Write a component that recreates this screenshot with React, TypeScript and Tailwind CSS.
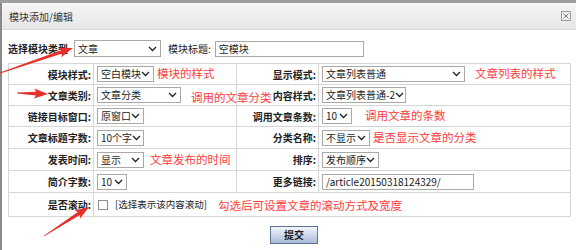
import React from 'react';

const FONT = { fontFamily: '"Noto Sans CJK SC", "Noto Sans", sans-serif' };

interface SelectProps {
  text: string;
  className: string;
}

const Chevron: React.FC = () => (
  <svg width="9" height="6" viewBox="0 0 9 6" className="shrink-0">
    <polyline points="1,1 4.5,4.5 8,1" fill="none" stroke="#222" strokeWidth="1.3" />
  </svg>
);

const Select: React.FC<SelectProps> = ({ text, className }) => (
  <div
    className={`shrink-0 inline-flex items-center justify-between h-[16px] border border-[#a9a9a9] bg-white pl-[3px] pr-[3px] text-[10px] leading-none text-[#222] align-middle ${className}`}
  >
    <span className="whitespace-nowrap">{text}</span>
    <Chevron />
  </div>
);

const Note: React.FC<{ children: React.ReactNode; className?: string }> = ({ children, className = '' }) => (
  <span className={`shrink-0 whitespace-nowrap text-[11.5px] leading-none text-[#ff3b3b] align-middle ${className}`}>{children}</span>
);

type Pt = [number, number];

// tapered red arrow: thin tail, wide notched head
const arrowPoints = (tail: Pt, tip: Pt) => {
  const dx = tip[0] - tail[0];
  const dy = tip[1] - tail[1];
  const len = Math.hypot(dx, dy);
  const d: Pt = [dx / len, dy / len];
  const n: Pt = [-d[1], d[0]];
  const head = 12;
  const base: Pt = [tip[0] - d[0] * head, tip[1] - d[1] * head];
  const at = (p: Pt, k: number): string => `${(p[0] + n[0] * k).toFixed(1)},${(p[1] + n[1] * k).toFixed(1)}`;
  return [
    at(tail, 0.4),
    at(base, 1.8),
    at([base[0] - d[0] * 2, base[1] - d[1] * 2], 5),
    `${tip[0]},${tip[1]}`,
    at([base[0] - d[0] * 2, base[1] - d[1] * 2], -5),
    at(base, -1.8),
    at(tail, -0.4),
  ].join(' ');
};

const ARROWS: [Pt, Pt][] = [
  [[0, 73], [73, 48]],
  [[17, 93], [48, 94]],
  [[44, 236], [89, 207]],
];

const Label: React.FC<{ children: React.ReactNode }> = ({ children }) => (
  <td className="border border-[#d6d6d6] pr-[2px] text-right text-[10px] font-bold text-[#222] whitespace-nowrap">{children}</td>
);

const Value: React.FC<{ children: React.ReactNode; colSpan?: number }> = ({ children, colSpan }) => (
  <td colSpan={colSpan} className="border border-[#d6d6d6] pl-[3px] whitespace-nowrap overflow-visible">
    <div className="flex items-center">{children}</div>
  </td>
);

export default function App() {
  return (
    <div className="relative w-[576px] h-[250px] bg-white overflow-hidden" style={FONT}>
      <div className="h-[3px] bg-[#9e9e9e]" />
      <div className="flex h-[247px] border-l-2 border-[#8a8a8a]">
        <div className="flex-1 flex flex-col">
          <div className="h-[27px] flex items-center justify-between pl-[7px] pr-[5px] bg-gradient-to-b from-[#f6f6f6] to-[#e6e6e6] border-b border-[#d8d8d8]">
            <span className="text-[10px] text-[#333]">模块添加/编辑</span>
            <div className="w-[10px] h-[10px] border border-[#9a9a9a] bg-[#f4f4f4] flex items-center justify-center">
              <svg width="6" height="6" viewBox="0 0 6 6">
                <path d="M0.5 0.5 L5.5 5.5 M5.5 0.5 L0.5 5.5" stroke="#777" strokeWidth="1" />
              </svg>
            </div>
          </div>

          <div className="pl-[6px] pr-[4px] pt-[10px]">
            <div className="flex items-center h-[17px]">
              <span className="text-[10px] font-bold text-[#222] w-[66px]">选择模块类型</span>
              <Select text="文章" className="w-[87px] h-[17px]" />
              <span className="ml-[7px] text-[10px] text-[#222]">模块标题:</span>
              <div className="ml-[4px] w-[149px] h-[16px] border border-[#a9a9a9] flex items-center pl-[3px] text-[10px] leading-none text-[#222]">
                空模块
              </div>
            </div>

            <table className="mt-[6px] w-[562px] table-fixed border-collapse">
              <colgroup>
                <col className="w-[85px]" />
                <col className="w-[143px]" />
                <col className="w-[82px]" />
                <col className="w-[252px]" />
              </colgroup>
              <tbody>
                <tr className="h-[21px]">
                  <Label>模块样式:</Label>
                  <Value>
                    <Select text="空白模块" className="w-[57px]" />
                    <Note className="ml-[3px]">模块的样式</Note>
                  </Value>
                  <Label>显示模式:</Label>
                  <Value>
                    <Select text="文章列表普通" className="w-[143px]" />
                    <Note className="ml-[10px]">文章列表的样式</Note>
                  </Value>
                </tr>
                <tr className="h-[21px]">
                  <Label>文章类别:</Label>
                  <Value>
                    <Select text="文章分类" className="w-[84px]" />
                    <Note className="ml-[10px] relative top-[3px]">调用的文章分类</Note>
                  </Value>
                  <Label>内容样式:</Label>
                  <Value>
                    <Select text="文章列表普通-2" className="w-[84px]" />
                  </Value>
                </tr>
                <tr className="h-[21px]">
                  <Label>链接目标窗口:</Label>
                  <Value>
                    <Select text="原窗口" className="w-[47px]" />
                  </Value>
                  <Label>调用文章条数:</Label>
                  <Value>
                    <Select text="10" className="w-[30px]" />
                    <Note className="ml-[13px]">调用文章的条数</Note>
                  </Value>
                </tr>
                <tr className="h-[22px]">
                  <Label>文章标题字数:</Label>
                  <Value>
                    <Select text="10个字" className="w-[47px]" />
                  </Value>
                  <Label>分类名称:</Label>
                  <Value>
                    <Select text="不显示" className="w-[48px]" />
                    <Note className="ml-[3px]">是否显示文章的分类</Note>
                  </Value>
                </tr>
                <tr className="h-[22px]">
                  <Label>发表时间:</Label>
                  <Value>
                    <Select text="显示" className="w-[47px]" />
                    <Note className="ml-[6px]">文章发布的时间</Note>
                  </Value>
                  <Label>排序:</Label>
                  <Value>
                    <Select text="发布顺序" className="w-[57px]" />
                  </Value>
                </tr>
                <tr className="h-[22px]">
                  <Label>简介字数:</Label>
                  <Value>
                    <Select text="10" className="w-[30px]" />
                  </Value>
                  <Label>更多链接:</Label>
                  <Value>
                    <div className="w-[152px] h-[16px] border border-[#a9a9a9] flex items-center pl-[3px] text-[10px] leading-none text-[#222]">
                      /article20150318124329/
                    </div>
                  </Value>
                </tr>
                <tr className="h-[24px]">
                  <Label>是否滚动:</Label>
                  <Value colSpan={3}>
                    <span className="inline-block shrink-0 w-[10px] h-[10px] border border-[#8f8f8f] bg-white ml-[1px]" />
                    <span className="shrink-0 ml-[7px] text-[9.5px] leading-none text-[#222]">[选择表示该内容滚动]</span>
                    <Note className="ml-[11px] relative top-[1px]">勾选后可设置文章的滚动方式及宽度</Note>
                  </Value>
                </tr>
              </tbody>
            </table>

            <div className="flex justify-center pl-[8px] mt-[9px]">
              <button className="w-[48px] h-[18px] border border-[#5d7190] bg-gradient-to-b from-[#f2f6fc] to-[#a9bcd8] text-[10px] font-bold leading-none text-[#1a1a1a]">
                提交
              </button>
            </div>
          </div>
        </div>
      </div>

      <svg className="absolute inset-0 pointer-events-none" width="576" height="250">
        {ARROWS.map(([t, p], i) => (
          <polygon key={i} points={arrowPoints(t, p)} fill="#e8302a" />
        ))}
      </svg>
    </div>
  );
}
